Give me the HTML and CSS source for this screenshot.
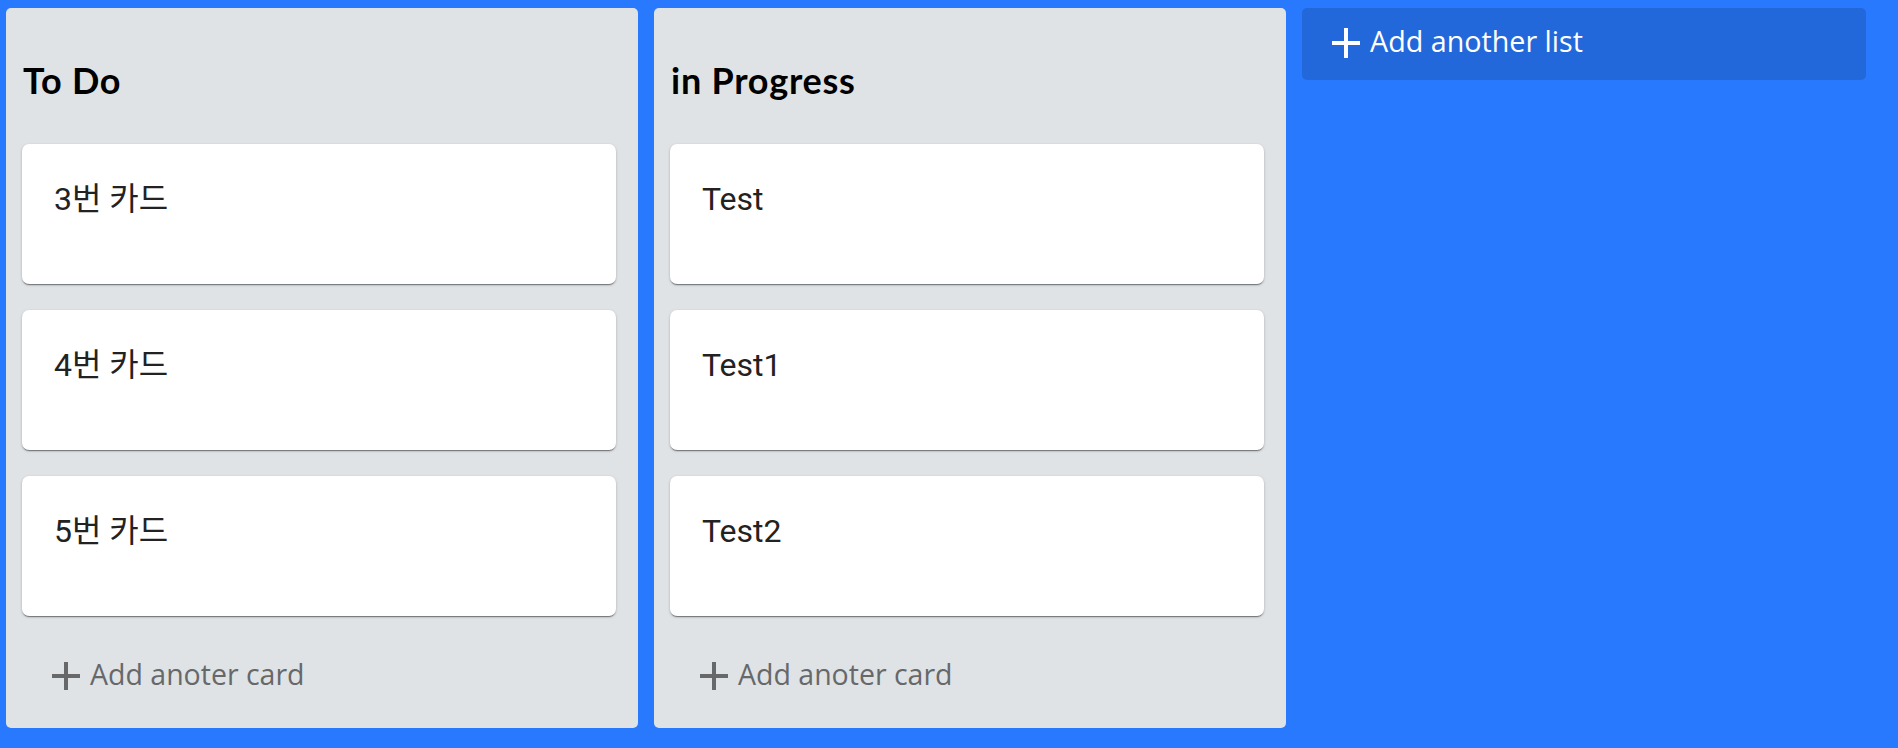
FILE: index.html
```html
<!DOCTYPE html>
<html lang="ko">
<head>
<meta charset="utf-8">
<title>Board</title>
<link rel="stylesheet" href="styles.css">
</head>
<body>
<div class="board">
  <section class="list">
    <h2 class="list-title">To Do</h2>
    <div class="cards">
      <div class="card">3번 카드</div>
      <div class="card">4번 카드</div>
      <div class="card">5번 카드</div>
    </div>
    <div class="add-card">
      <svg class="plus" width="28" height="28" viewBox="0 0 28 28"><path d="M14 0V28M0 14H28" stroke="currentColor" stroke-width="4"/></svg>
      <span>Add anoter card</span>
    </div>
  </section>
  <section class="list">
    <h2 class="list-title">in Progress</h2>
    <div class="cards">
      <div class="card">Test</div>
      <div class="card">Test1</div>
      <div class="card">Test2</div>
    </div>
    <div class="add-card">
      <svg class="plus" width="28" height="28" viewBox="0 0 28 28"><path d="M14 0V28M0 14H28" stroke="currentColor" stroke-width="4"/></svg>
      <span>Add anoter card</span>
    </div>
  </section>
  <div class="add-list">
    <svg class="plus" width="28" height="30" viewBox="0 0 28 30"><path d="M14 0V30M0 15H28" stroke="currentColor" stroke-width="4"/></svg>
    <span>Add another list</span>
  </div>
</div>
</body>
</html>
```
FILE: styles.css
```css
html, body {
  margin: 0;
  padding: 0;
}
body {
  background: #2979ff;
  width: 1898px;
  height: 748px;
  overflow: hidden;
}
.board {
  display: flex;
  align-items: flex-start;
  gap: 16px;
  padding: 8px 0 0 6px;
}
.list {
  width: 632px;
  height: 720px;
  box-sizing: border-box;
  background: #dfe3e6;
  border-radius: 5px;
  padding: 0 22px 0 16px;
}
.list-title {
  margin: 51px 0 42px 1px;
  font-family: "Lato", "Noto Sans", sans-serif;
  font-weight: 700;
  font-size: 36px;
  letter-spacing: 0.75px;
  line-height: 1.2;
  color: #000;
}
.cards {
  display: flex;
  flex-direction: column;
  gap: 26px;
}
.card {
  height: 140px;
  box-sizing: border-box;
  background: #fff;
  border-radius: 7px;
  padding: 36px 32px;
  font-family: "Roboto", "Noto Sans CJK KR", sans-serif;
  font-size: 32px;
  line-height: 1.2;
  color: #222;
  box-shadow: 0 1px 3px rgba(0,0,0,0.2), 0 1px 1px rgba(0,0,0,0.14), 0 2px 1px -1px rgba(0,0,0,0.3);
}
.add-card {
  display: flex;
  align-items: center;
  gap: 10px;
  height: 46px;
  margin-top: 38px;
  padding: 0 0 6px 30px;
  box-sizing: border-box;
  color: #67686a;
  font-family: "Open Sans", sans-serif;
  font-size: 28.5px;
  line-height: 40px;
}
.add-card .plus,
.add-list .plus {
  flex: none;
  margin-top: 4px;
}
.add-list {
  width: 564px;
  height: 72px;
  box-sizing: border-box;
  background: #2368db;
  border-radius: 5px;
  display: flex;
  align-items: center;
  gap: 10px;
  padding: 0 30px 6px 30px;
  color: #fff;
  font-family: "Open Sans", sans-serif;
  font-size: 28.7px;
  line-height: 40px;
}
```
